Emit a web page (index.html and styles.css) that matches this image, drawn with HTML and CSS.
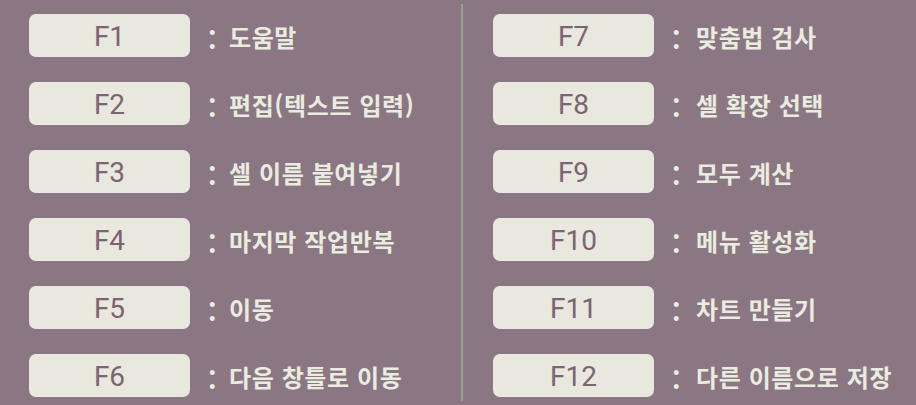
FILE: index.html
```html
<!DOCTYPE html>
<html lang="ko">
<head>
<meta charset="utf-8">
<link rel="stylesheet" href="styles.css">
</head>
<body>
<div class="page">
  <div class="col col-left">
    <div class="row"><div class="key">F1</div><span class="colon">:</span><span class="desc">도움말</span></div>
    <div class="row"><div class="key">F2</div><span class="colon">:</span><span class="desc">편집(텍스트 입력)</span></div>
    <div class="row"><div class="key">F3</div><span class="colon">:</span><span class="desc">셀 이름 붙여넣기</span></div>
    <div class="row"><div class="key">F4</div><span class="colon">:</span><span class="desc">마지막 작업반복</span></div>
    <div class="row"><div class="key">F5</div><span class="colon">:</span><span class="desc">이동</span></div>
    <div class="row"><div class="key">F6</div><span class="colon">:</span><span class="desc">다음 창틀로 이동</span></div>
  </div>
  <div class="divider"></div>
  <div class="col col-right">
    <div class="row"><div class="key">F7</div><span class="colon">:</span><span class="desc">맞춤법 검사</span></div>
    <div class="row"><div class="key">F8</div><span class="colon">:</span><span class="desc">셀 확장 선택</span></div>
    <div class="row"><div class="key">F9</div><span class="colon">:</span><span class="desc">모두 계산</span></div>
    <div class="row"><div class="key">F10</div><span class="colon">:</span><span class="desc">메뉴 활성화</span></div>
    <div class="row"><div class="key">F11</div><span class="colon">:</span><span class="desc">차트 만들기</span></div>
    <div class="row"><div class="key">F12</div><span class="colon">:</span><span class="desc">다른 이름으로 저장</span></div>
  </div>
</div>
</body>
</html>
```

FILE: styles.css
```css
html, body {
  margin: 0;
  padding: 0;
  background: #8b7783;
  width: 916px;
  height: 405px;
  overflow: hidden;
}
.page {
  display: flex;
  height: 405px;
}
.col {
  display: flex;
  flex-direction: column;
  gap: 25px;
  padding-top: 14px;
}
.col-left {
  width: 432px;
  padding-left: 29px;
}
.col-right {
  padding-left: 30px;
}
.divider {
  width: 2px;
  margin-top: 4px;
  height: 397px;
  background: #8aa98d;
}
.row {
  display: flex;
  align-items: center;
  height: 43px;
}
.key {
  width: 161px;
  height: 43px;
  box-sizing: border-box;
  background: #e8e8df;
  border-radius: 7px;
  display: flex;
  align-items: center;
  justify-content: center;
  font-family: Roboto, "Noto Sans", sans-serif;
  font-size: 28px;
  color: #7c6373;
  padding-top: 2px;
}
.colon {
  font-family: "Noto Sans CJK KR", sans-serif;
  font-weight: 700;
  font-size: 26px;
  line-height: 26px;
  color: #e9ecdf;
  margin-left: 18px;
  width: 21px;
  padding-top: 6px;
}
.desc {
  font-family: "Noto Sans CJK KR", sans-serif;
  font-weight: 700;
  font-size: 24px;
  letter-spacing: 0.6px;
  color: #e9ecdf;
  padding-top: 2px;
}
.col-right .colon {
  margin-left: 18px;
  width: 24px;
}
```
